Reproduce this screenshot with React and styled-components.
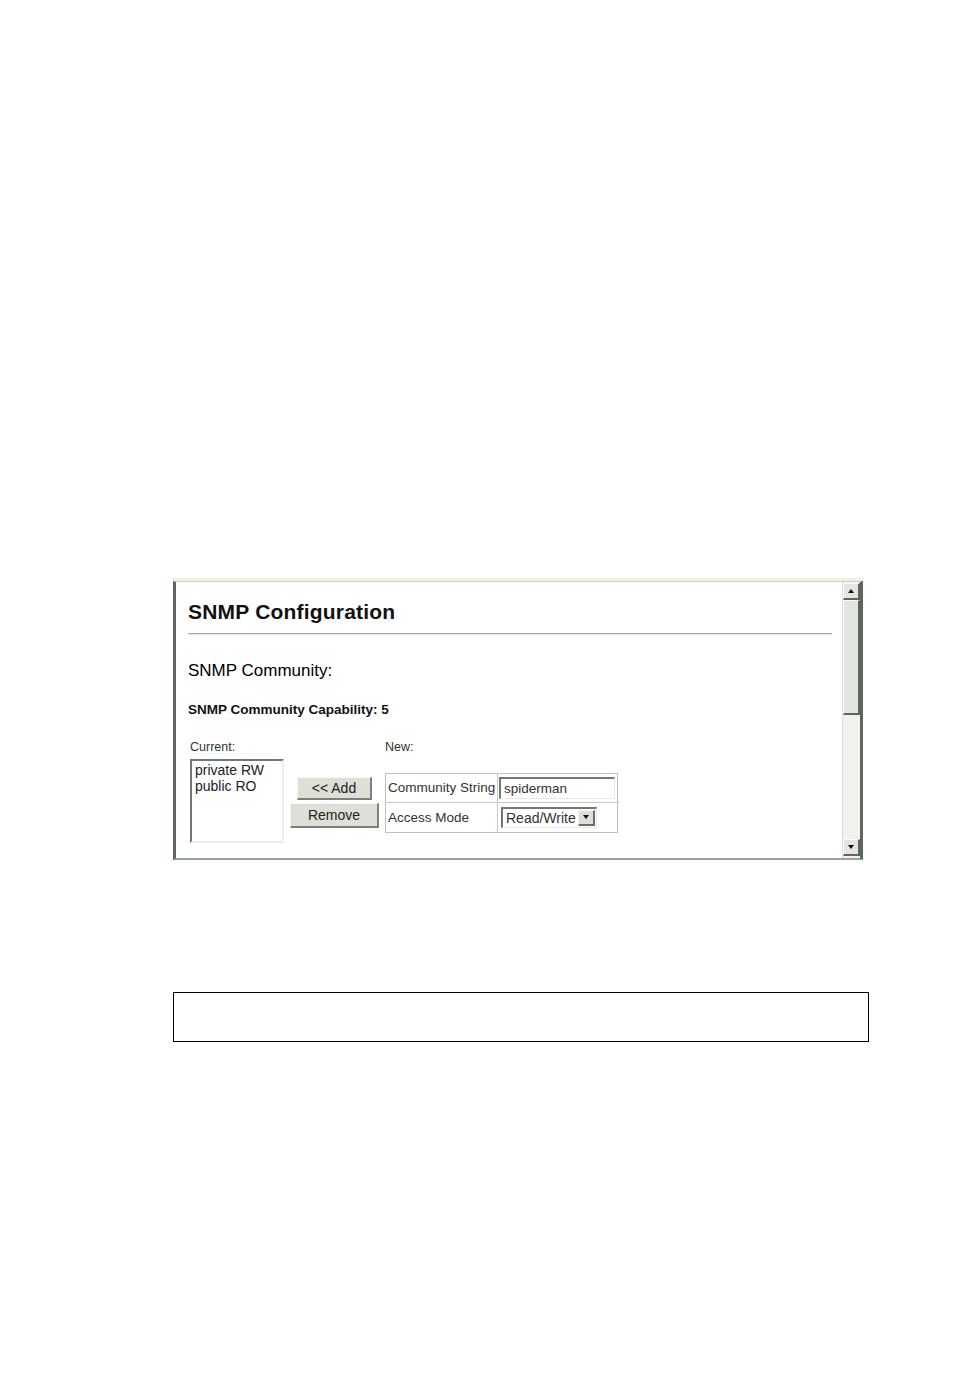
import styled, { createGlobalStyle } from "styled-components";

const GlobalStyle = createGlobalStyle`
    html, body {
        margin: 0;
        padding: 0;
        background: #ffffff;
    }
    body {
        font-family: "Liberation Sans", Arial, sans-serif;
        color: #111;
    }
`;

const Page = styled.div`
    width: 954px;
    min-height: 1388px;
    box-sizing: border-box;
    padding: 581px 0 0 173px;
`;

const Frame = styled.div`
    width: 690px;
    height: 279px;
    box-sizing: border-box;
    display: flex;
    background: #ffffff;
    border-top: 1px solid #c9d2bd;
    border-left: 3px solid #5b665f;
    border-right: 3px solid #5b665f;
    border-bottom: 2px solid #9aa39c;
    box-shadow: 0 -3px 0 #eef3e1;
`;

const Content = styled.div`
    flex: 1;
    padding: 18px 10px 0 12px;
    overflow: hidden;
`;

const Title = styled.h1`
    margin: 0;
    font-size: 21px;
    line-height: 24px;
    font-weight: bold;
    letter-spacing: 0.2px;
    color: #111;
`;

const Rule = styled.div`
    margin-top: 9px;
    height: 1px;
    background: #a4a8a4;
    border-bottom: 1px solid #e6e8e6;
`;

const Section = styled.h2`
    margin: 26px 0 0;
    font-size: 17px;
    line-height: 20px;
    font-weight: normal;
    color: #000;
`;

const Capability = styled.div`
    margin-top: 21px;
    font-size: 13.5px;
    line-height: 16px;
    font-weight: bold;
`;

const FormGrid = styled.div`
    margin: 22px 0 0 2px;
    display: grid;
    grid-template-columns: 94px 89px auto;
    column-gap: 6px;
    row-gap: 5px;
    align-items: center;
`;

const Label = styled.div`
    font-size: 12.5px;
    line-height: 14px;
    color: #333;
    grid-column: ${(p) => p.$col};
`;

const ListBox = styled.div`
    height: 84px;
    box-sizing: border-box;
    padding: 1px 3px;
    border-top: 2px solid #6d7a72;
    border-left: 2px solid #6d7a72;
    border-right: 2px solid #ecefec;
    border-bottom: 2px solid #ecefec;
    font-size: 14px;
    line-height: 16px;
    color: #222;
`;

const ListItem = styled.div`
    white-space: nowrap;
`;

const ButtonColumn = styled.div`
    display: flex;
    flex-direction: column;
    align-items: center;
    gap: 3px;
    margin-top: 2px;
`;

const Button = styled.button`
    width: ${(p) => p.$width}px;
    height: ${(p) => p.$height}px;
    padding: 0;
    background: #dedfd7;
    border-top: 1px solid #f6f6f2;
    border-left: 1px solid #f6f6f2;
    border-right: 2px solid #7c807c;
    border-bottom: 2px solid #7c807c;
    font-family: "Liberation Sans", Arial, sans-serif;
    font-size: 14px;
    color: #222;
    cursor: pointer;

    :focus {
        outline: none;
    }
`;

const Table = styled.div`
    width: 233px;
    margin-top: 3px;
    display: grid;
    grid-template-columns: 112px 121px;
    grid-auto-rows: 29px;
    border: 1px solid #bfc3bf;
    box-sizing: border-box;
`;

const Cell = styled.div`
    display: flex;
    align-items: center;
    padding-left: ${(p) => p.$pad}px;
    border-right: ${(p) => (p.$last ? "none" : "1px solid #c6c9c6")};
    border-bottom: ${(p) => (p.$bottom ? "none" : "1px solid #c6c9c6")};
    font-size: 13.5px;
    color: #333;
    white-space: nowrap;
`;

const TextInput = styled.div`
    width: 116px;
    height: 22px;
    box-sizing: border-box;
    display: flex;
    align-items: center;
    padding-left: 3px;
    border-top: 2px solid #6d7a72;
    border-left: 2px solid #6d7a72;
    border-right: 1px solid #e6e8e6;
    border-bottom: 1px solid #e6e8e6;
    font-size: 13.5px;
    color: #333;
`;

const Select = styled.div`
    width: 96px;
    height: 21px;
    margin-left: 2px;
    box-sizing: border-box;
    display: flex;
    align-items: center;
    justify-content: space-between;
    padding: 0 1px 0 3px;
    border-top: 2px solid #6d7a72;
    border-left: 2px solid #6d7a72;
    border-right: 1px solid #e6e8e6;
    border-bottom: 1px solid #e6e8e6;
    font-size: 14px;
    color: #333;
`;

const ArrowButton = styled.span`
    width: 17px;
    height: 16px;
    box-sizing: border-box;
    display: flex;
    align-items: center;
    justify-content: center;
    background: #dedfd7;
    border-top: 1px solid #f6f6f2;
    border-left: 1px solid #f6f6f2;
    border-right: 2px solid #6a6e6a;
    border-bottom: 2px solid #6a6e6a;
`;

const Triangle = styled.span`
    width: 0;
    height: 0;
    border-left: 3.5px solid transparent;
    border-right: 3.5px solid transparent;
    border-top: ${(p) => (p.$up ? "none" : "4px solid #111")};
    border-bottom: ${(p) => (p.$up ? "4px solid #111" : "none")};
`;

const ScrollBar = styled.div`
    width: 18px;
    display: flex;
    flex-direction: column;
    padding: 1px 0 2px;
    box-sizing: border-box;
    background: #f1f2ec;
    border-left: 1px solid #dcdfd8;
`;

const ScrollButton = styled.div`
    height: 17px;
    box-sizing: border-box;
    display: flex;
    align-items: center;
    justify-content: center;
    background: #e4e5de;
    border-top: 1px solid #fafaf6;
    border-left: 1px solid #fafaf6;
    border-right: 2px solid #5e6660;
    border-bottom: 2px solid #5e6660;
`;

const Thumb = styled.div`
    height: 115px;
    box-sizing: border-box;
    background: #e4e5de;
    border-top: 1px solid #fafaf6;
    border-left: 1px solid #fafaf6;
    border-right: 2px solid #5e6660;
    border-bottom: 2px solid #5e6660;
`;

const Track = styled.div`
    flex: 1;
`;

const NoteBox = styled.div`
    margin-top: 132px;
    width: 696px;
    height: 50px;
    box-sizing: border-box;
    border: 1px solid #000;
`;

function App() {
    return (
        <Page>
            <GlobalStyle />
            <Frame>
                <Content>
                    <Title>SNMP Configuration</Title>
                    <Rule />
                    <Section>SNMP Community:</Section>
                    <Capability>SNMP Community Capability: 5</Capability>
                    <FormGrid>
                        <Label $col={1}>Current:</Label>
                        <Label $col={3}>New:</Label>
                        <ListBox>
                            <ListItem>private RW</ListItem>
                            <ListItem>public RO</ListItem>
                        </ListBox>
                        <ButtonColumn>
                            <Button $width={75} $height={23}>&lt;&lt; Add</Button>
                            <Button $width={89} $height={25}>Remove</Button>
                        </ButtonColumn>
                        <Table>
                            <Cell $pad={2}>Community String</Cell>
                            <Cell $pad={1} $last>
                                <TextInput>spiderman</TextInput>
                            </Cell>
                            <Cell $pad={2} $bottom>Access Mode</Cell>
                            <Cell $pad={1} $last $bottom>
                                <Select>
                                    Read/Write
                                    <ArrowButton>
                                        <Triangle />
                                    </ArrowButton>
                                </Select>
                            </Cell>
                        </Table>
                    </FormGrid>
                </Content>
                <ScrollBar>
                    <ScrollButton>
                        <Triangle $up />
                    </ScrollButton>
                    <Thumb />
                    <Track />
                    <ScrollButton>
                        <Triangle />
                    </ScrollButton>
                </ScrollBar>
            </Frame>
            <NoteBox />
        </Page>
    );
}

export default App;
